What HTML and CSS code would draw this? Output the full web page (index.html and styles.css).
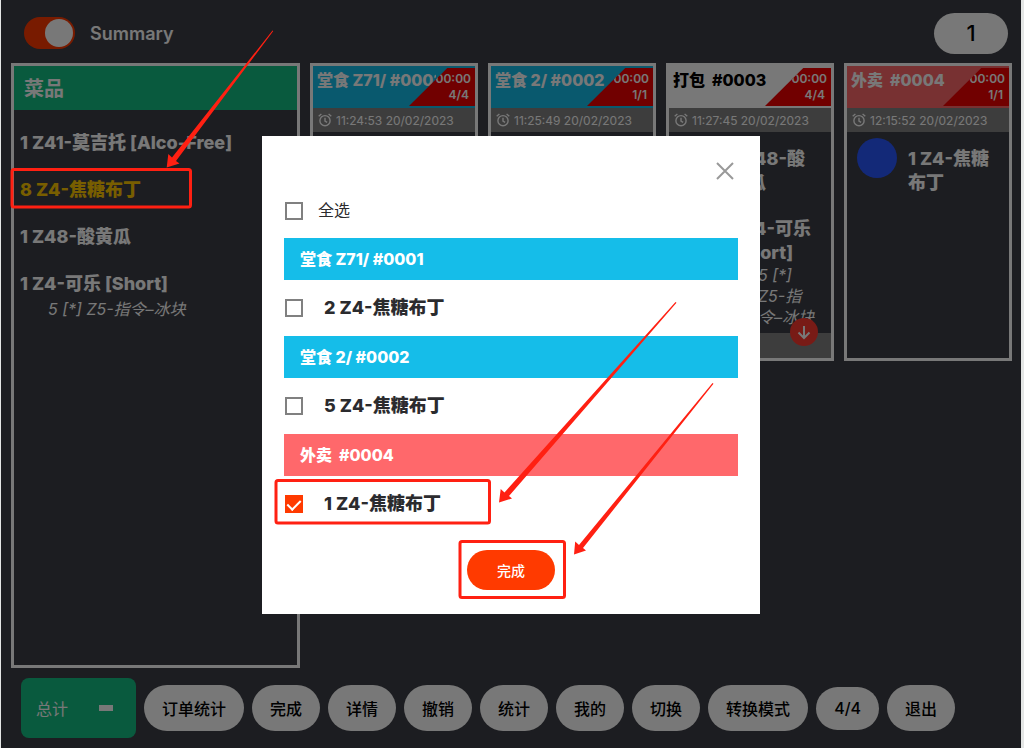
FILE: index.html
```html
<!DOCTYPE html>
<html lang="zh-CN">
<head>
    <meta charset="UTF-8">
    <meta name="viewport" content="width=device-width, initial-scale=1.0">
    <title>Summary</title>
    <link rel="stylesheet" href="styles.css">
</head>
<body>

    <div class="screen">
        <!-- Top bar -->
        <header class="topbar">
            <label class="switch">
                <input type="checkbox" role="switch" checked>
                <span>Summary</span>
            </label>
            <button type="button" class="pill page-number">1</button>
        </header>

        <main class="board">
            <!-- Dish summary -->
            <section class="summary">
                <h2>菜品</h2>
                <ul>
                    <li>1 Z41-莫吉托 [Alco-Free]</li>
                    <li class="active">8 Z4-焦糖布丁</li>
                    <li>1 Z48-酸黄瓜</li>
                    <li>1 Z4-可乐 [Short]
                        <em>5 [*] Z5-指令–冰块</em>
                    </li>
                </ul>
            </section>

            <!-- Orders -->
            <section class="orders">
                <article class="card dine-in">
                    <header>
                        <h3>堂食 Z71/ #0001</h3>
                        <div class="corner"><span>00:00</span><span>4/4</span></div>
                    </header>
                    <div class="time">
                        <svg viewBox="0 0 14 14"><circle cx="7" cy="7.7" r="5.1"/><path d="M7 4.8v3.2l2.1 1.3M.7 3.2 3.4 1M13.3 3.2 10.6 1"/></svg>
                        <span>11:24:53 20/02/2023</span>
                    </div>
                </article>

                <article class="card dine-in">
                    <header>
                        <h3>堂食 2/ #0002</h3>
                        <div class="corner"><span>00:00</span><span>1/1</span></div>
                    </header>
                    <div class="time">
                        <svg viewBox="0 0 14 14"><circle cx="7" cy="7.7" r="5.1"/><path d="M7 4.8v3.2l2.1 1.3M.7 3.2 3.4 1M13.3 3.2 10.6 1"/></svg>
                        <span>11:25:49 20/02/2023</span>
                    </div>
                </article>

                <article class="card packed">
                    <header>
                        <h3>打包&nbsp; #0003</h3>
                        <div class="corner"><span>00:00</span><span>4/4</span></div>
                    </header>
                    <div class="time">
                        <svg viewBox="0 0 14 14"><circle cx="7" cy="7.7" r="5.1"/><path d="M7 4.8v3.2l2.1 1.3M.7 3.2 3.4 1M13.3 3.2 10.6 1"/></svg>
                        <span>11:27:45 20/02/2023</span>
                    </div>
                    <div class="items">
                        <div class="item"><i></i><p>1 Z48-酸黄瓜</p></div>
                        <div class="item"><i></i><p>1 Z4-可乐 [Short] <em>5 [*] Z5-指令–冰块</em></p></div>
                    </div>
                    <footer>
                        <button type="button" class="more" aria-label="更多">
                            <svg viewBox="0 0 28 28"><path d="M14 8v12M8.500 14.500 14 20l5.500-5.500"/></svg>
                        </button>
                    </footer>
                </article>

                <article class="card takeaway">
                    <header>
                        <h3>外卖&nbsp; #0004</h3>
                        <div class="corner"><span>00:00</span><span>1/1</span></div>
                    </header>
                    <div class="time">
                        <svg viewBox="0 0 14 14"><circle cx="7" cy="7.7" r="5.1"/><path d="M7 4.8v3.2l2.1 1.3M.7 3.2 3.4 1M13.3 3.2 10.6 1"/></svg>
                        <span>12:15:52 20/02/2023</span>
                    </div>
                    <div class="items">
                        <div class="item"><i class="dot"></i><p>1 Z4-焦糖布丁</p></div>
                    </div>
                </article>
            </section>
        </main>

        <!-- Bottom actions -->
        <nav class="actions">
            <div class="total"><span>总计</span><span class="dash"></span></div>
            <button type="button" class="pill">订单统计</button>
            <button type="button" class="pill">完成</button>
            <button type="button" class="pill">详情</button>
            <button type="button" class="pill">撤销</button>
            <button type="button" class="pill">统计</button>
            <button type="button" class="pill">我的</button>
            <button type="button" class="pill">切换</button>
            <button type="button" class="pill">转换模式</button>
            <button type="button" class="pill count">4/4</button>
            <button type="button" class="pill">退出</button>
        </nav>

        <!-- Dialog -->
        <div class="overlay">
            <form class="modal" role="dialog" aria-modal="true">
                <button type="button" class="close" aria-label="关闭">
                    <svg viewBox="0 0 18 18"><path d="M1 1l16 16M17 1 1 17"/></svg>
                </button>
                <label class="check check-all"><input type="checkbox"><span>全选</span></label>

                <h4>堂食 Z71/ #0001</h4>
                <label class="check"><input type="checkbox"><span>2 Z4-焦糖布丁</span></label>

                <h4>堂食 2/ #0002</h4>
                <label class="check"><input type="checkbox"><span>5 Z4-焦糖布丁</span></label>

                <h4 class="red">外卖&nbsp; #0004</h4>
                <label class="check"><input type="checkbox" checked><span>1 Z4-焦糖布丁</span></label>

                <button type="button" class="done">完成</button>
            </form>
        </div>
    </div>

    <!-- Step marks -->
    <svg class="marks" viewBox="0 0 1024 748">
        <rect x="12" y="169.500" width="178.500" height="37.500" rx="2"/>
        <rect x="276" y="480.500" width="213.500" height="42.500" rx="2"/>
        <rect x="460" y="541.500" width="104.500" height="56" rx="2"/>
        <path d="M272.500 30.500 172 157.500 168.300 154 166.700 167.500 179.500 163.500 176 161 273.300 31z"/>
        <path d="M675.500 302 504.500 492.500 500.700 489 499 502.500 512 498.500 509 496 676.500 302.700z"/>
        <path d="M712.500 383 579 545 575.200 541.500 574 554.500 586 550.500 583 548 713.500 383.700z"/>
    </svg>

</body>
</html>
```
FILE: styles.css
```css
* {
    box-sizing: border-box;
}

body {
    margin: 0;
    background-color: #e4e6e5;
    font-family: Inter, "Noto Sans CJK SC", sans-serif;
    color: #fff;
}

h2, h3, h4, p, ul {
    margin: 0;
    padding: 0;
}

button {
    border: none;
    padding: 0;
    font-family: inherit;
    cursor: pointer;
}

svg {
    display: block;
    fill: none;
    stroke: currentColor;
}

.screen {
    position: relative;
    display: flex;
    flex-direction: column;
    min-height: 100vh;
    margin: 0 3px 0 1px;
    background-color: #3c3e46;
}

/* top bar */

.topbar {
    display: flex;
    justify-content: space-between;
    align-items: center;
    height: 63px;
    padding: 3px 13px 0 23px;
}

.switch {
    display: flex;
    align-items: center;
    gap: 15px;
    font-size: 18px;
    font-weight: 600;
}

.switch input {
    appearance: none;
    width: 51px;
    height: 32px;
    margin: 0;
    padding: 2px;
    border-radius: 16px;
    background-color: #ff3a00;
}

.switch input::before {
    content: "";
    display: block;
    width: 28px;
    height: 28px;
    margin-left: auto;
    border-radius: 50%;
    background-color: #fff;
}

.pill {
    height: 46px;
    padding: 0 18px;
    border-radius: 23px;
    background-color: #fff;
    color: #000;
    font-size: 16px;
    font-weight: 500;
}

.page-number {
    width: 74px;
    height: 41px;
    font-size: 22px;
}

/* board */

.board {
    flex: 1;
    display: flex;
    align-items: stretch;
    gap: 10px;
    padding: 0 9px 0 10px;
}

.summary {
    width: 289px;
    border: 3px solid #fff;
}

.summary h2 {
    height: 44px;
    padding-left: 10px;
    background-color: #15c084;
    font-size: 20px;
    line-height: 46px;
}

.summary ul {
    padding: 21px 6px;
    list-style: none;
    font-size: 18px;
    font-weight: 800;
    line-height: 24px;
}

.summary li {
    margin-bottom: 23px;
}

.summary .active {
    color: #ffc800;
}

em {
    display: block;
    padding-left: 28px;
    font-size: 16px;
    font-weight: 400;
    line-height: 21px;
}

.summary em {
    margin-top: 3px;
}

.orders {
    flex: 1;
    display: grid;
    grid-template-columns: repeat(4, minmax(0, 1fr));
    align-items: start;
    gap: 10px;
}

.card {
    display: flex;
    flex-direction: column;
    min-height: 298px;
    border: 3px solid #fff;
}

.card header {
    position: relative;
    height: 42px;
    padding: 4px;
    background-color: #15bde9;
}

.packed header {
    background-color: #fff;
    color: #000;
}

.takeaway header {
    background-color: #ff686b;
}

.card h3 {
    margin-right: 35px;
    overflow: hidden;
    font-size: 16px;
    font-weight: 800;
    line-height: 20px;
    white-space: nowrap;
}

.corner {
    position: absolute;
    top: 2px;
    right: 0;
    display: flex;
    flex-direction: column;
    align-items: flex-end;
    width: 66px;
    height: 38px;
    padding: 3px 4px;
    background-color: #f00000;
    clip-path: polygon(58% 0, 100% 0, 100% 100%, 0 100%);
    color: #fff;
    font-size: 12px;
    font-weight: 600;
    line-height: 16px;
}

.corner span:last-child {
    padding-right: 2px;
}

.time {
    display: flex;
    align-items: center;
    gap: 4px;
    height: 24px;
    padding-left: 5px;
    background-color: #838383;
    font-size: 12px;
}

.time svg {
    width: 14px;
    height: 14px;
    stroke-width: 1.4;
}

.items {
    flex: 1;
    padding: 6px 12px 4px 10px;
}

.item {
    display: flex;
    gap: 11px;
    margin-bottom: 13px;
}

.item:last-child {
    margin-bottom: 0;
}

.item i {
    flex: none;
    width: 40px;
    height: 40px;
    border-radius: 50%;
}

.item .dot {
    background-color: #2a57ff;
}

.item p {
    padding-top: 9px;
    font-size: 18px;
    font-weight: 800;
    line-height: 24px;
}

.card footer {
    position: relative;
    height: 25px;
    background-color: #838383;
}

.more {
    position: absolute;
    top: -15px;
    right: 13px;
    width: 28px;
    height: 28px;
    border-radius: 50%;
    background-color: #ff3a30;
    color: #fff;
}

.more svg {
    stroke-width: 2;
}

/* bottom actions */

.actions {
    display: flex;
    align-items: center;
    gap: 8px;
    padding: 10px 20px;
}

.total {
    display: flex;
    align-items: center;
    justify-content: space-between;
    width: 115px;
    height: 60px;
    padding: 0 23px 0 15px;
    border-radius: 8px;
    background-color: #15c084;
    font-size: 16px;
}

.dash {
    width: 14px;
    height: 6px;
    background-color: #fff;
}

.count {
    height: 43px;
}

/* dialog */

.overlay {
    position: absolute;
    inset: 0;
    display: flex;
    align-items: center;
    justify-content: center;
    padding-top: 2px;
    background-color: rgba(0, 0, 0, 0.53);
}

.modal {
    display: flex;
    flex-direction: column;
    width: 498px;
    padding: 22px 22px 24px;
    background-color: #fff;
    color: #2b2b2e;
}

.close {
    display: flex;
    align-items: center;
    justify-content: center;
    align-self: flex-end;
    width: 26px;
    height: 26px;
    background: none;
    color: #999;
}

.close svg {
    width: 18px;
    height: 18px;
    stroke-width: 2;
}

.modal h4 {
    height: 42px;
    padding-left: 16px;
    background-color: #15bde9;
    color: #fff;
    font-size: 16px;
    font-weight: 800;
    line-height: 42px;
}

.modal .red {
    background-color: #ff686b;
}

.check {
    display: flex;
    align-items: center;
    gap: 21px;
    height: 56px;
    padding-left: 1px;
    font-size: 18px;
    font-weight: 800;
}

.check span {
    padding-bottom: 4px;
}

.check-all {
    gap: 15px;
    height: 54px;
    font-size: 16px;
    font-weight: 400;
}

.check input {
    appearance: none;
    display: flex;
    justify-content: center;
    width: 18px;
    height: 18px;
    margin: 0;
    border: 2px solid #808080;
}

.check input:checked {
    border-color: #ff3a00;
    background-color: #ff3a00;
}

.check input:checked::before {
    content: "";
    width: 6px;
    height: 11px;
    border: solid #fff;
    border-width: 0 2px 2px 0;
    transform: rotate(45deg);
}

.done {
    align-self: center;
    width: 88px;
    height: 40px;
    margin-top: 18px;
    border-radius: 20px;
    background-color: #ff3a00;
    color: #fff;
    font-size: 14px;
    font-weight: 500;
}

/* step marks */

.marks {
    position: absolute;
    top: 0;
    left: 0;
    width: 100%;
    pointer-events: none;
}

.marks rect {
    stroke: #ff2012;
    stroke-width: 3;
}

.marks path {
    fill: #ff2012;
    stroke: none;
}
```
